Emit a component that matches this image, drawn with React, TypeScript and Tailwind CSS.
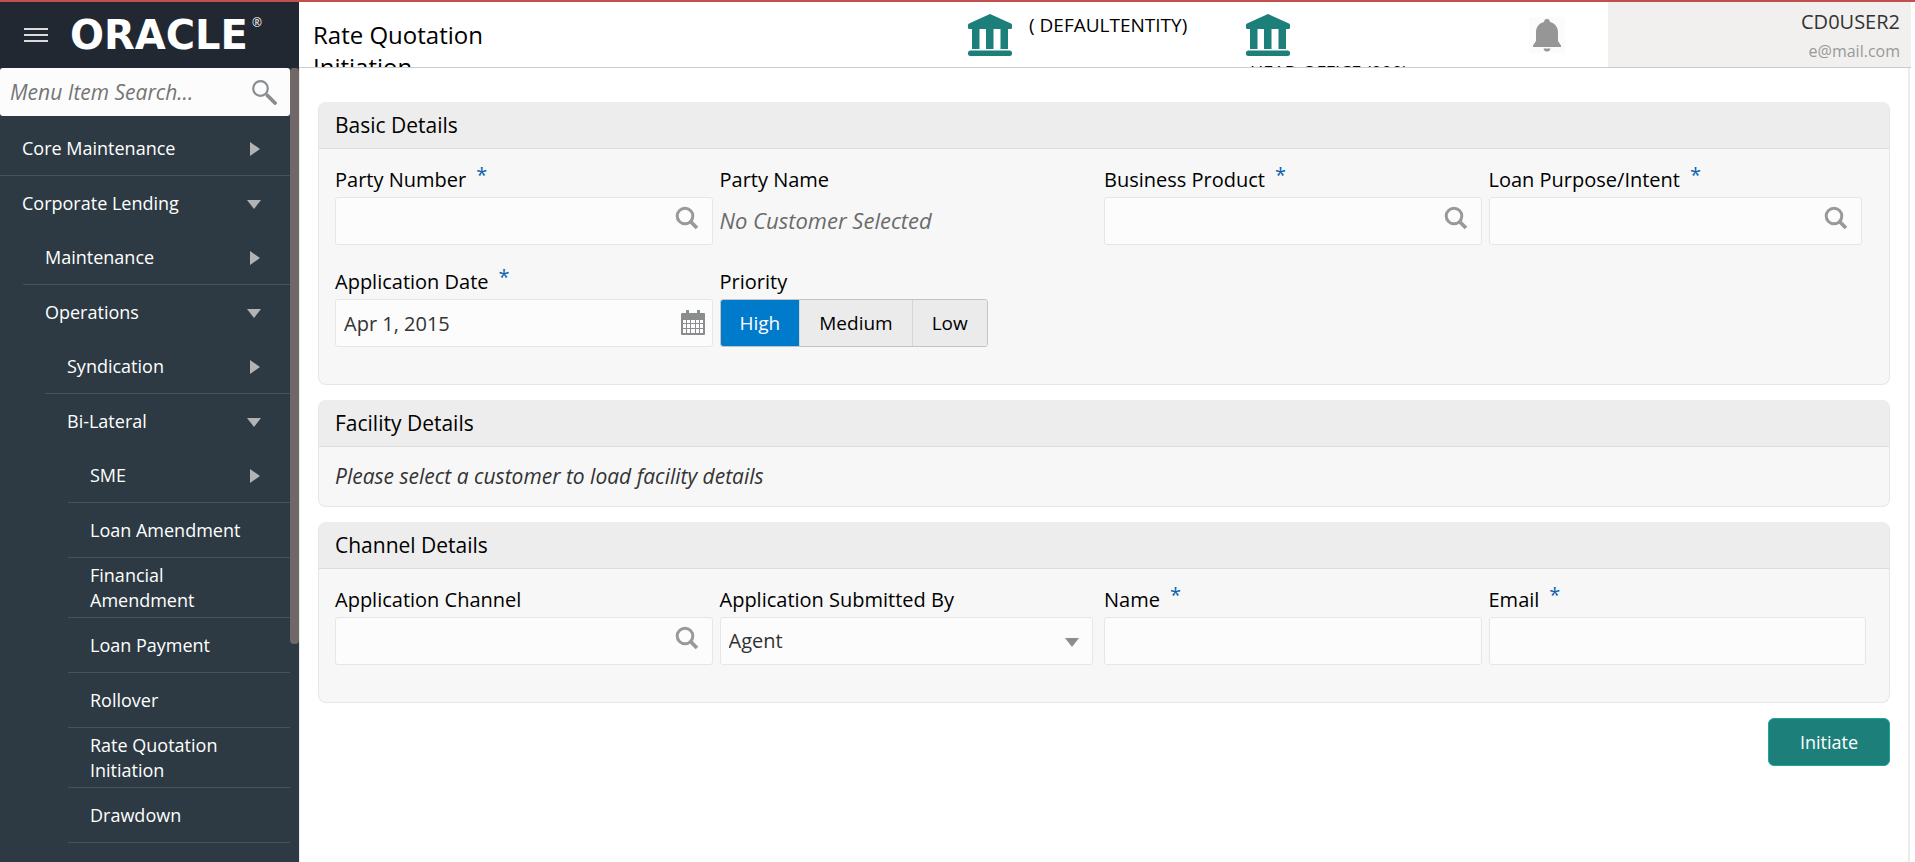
import { useState } from 'react'
import type { ReactNode } from 'react'

type MenuItem = {
  label: string
  level: 0 | 1 | 2 | 3
  state?: 'open' | 'closed'
}

const MENU_ITEMS: MenuItem[] = [
  { label: 'Core Maintenance', level: 0, state: 'closed' },
  { label: 'Corporate Lending', level: 0, state: 'open' },
  { label: 'Maintenance', level: 1, state: 'closed' },
  { label: 'Operations', level: 1, state: 'open' },
  { label: 'Syndication', level: 2, state: 'closed' },
  { label: 'Bi-Lateral', level: 2, state: 'open' },
  { label: 'SME', level: 3, state: 'closed' },
  { label: 'Loan Amendment', level: 3 },
  { label: 'Financial Amendment', level: 3 },
  { label: 'Loan Payment', level: 3 },
  { label: 'Rollover', level: 3 },
  { label: 'Rate Quotation Initiation', level: 3 },
  { label: 'Drawdown', level: 3 },
]

const LEVEL_INDENT = ['ml-0', 'ml-[23px]', 'ml-[45px]', 'ml-[68px]']

const PRIORITIES = ['High', 'Medium', 'Low']

const INPUT_CLASS =
  'h-12 w-full rounded-[3px] border border-[#e6e6e6] bg-[#fcfcfc] px-2 text-xl text-[#333] outline-none'

const BankIcon = () => (
  <svg width="44" height="42" viewBox="0 0 44 42" fill="#1c7f7a" className="shrink-0" aria-hidden="true">
    <path d="M22 0 43 9.5Q44 10 44 11V13.5Q44 15 42.500 15H1.500Q0 15 0 13.500V11Q0 10 1 9.500Z" />
    <path d="M4 14h7.500v21H4zM18 14h7.500v21H18zM32.500 14H40v21h-7.500z" />
    <rect y="36.500" width="44" height="5.500" rx="2.500" />
  </svg>
)

const SearchIcon = () => (
  <svg width="24" height="24" viewBox="0 0 24 24" fill="none" stroke="#999" aria-hidden="true">
    <circle cx="10" cy="10" r="7.800" strokeWidth="3" />
    <path d="m15.500 15.500 6.500 6.500" strokeWidth="3.800" />
  </svg>
)

const CalendarIcon = () => (
  <svg width="24" height="25" viewBox="0 0 24 25" aria-hidden="true">
    <path
      fill="#8a8c8e"
      fillRule="evenodd"
      d="M1 3h4V0h3v3h8V0h3v3h4q1 0 1 1v20q0 1-1 1H1q-1 0-1-1V4q0-1 1-1ZM2 10v3h3v-3ZM6 10v3h3v-3ZM10 10v3h4v-3ZM15 10v3h3v-3ZM19 10v3h3v-3ZM2 14v4h3v-4ZM6 14v4h3v-4ZM10 14v4h4v-4ZM15 14v4h3v-4ZM19 14v4h3v-4ZM2 19v4h3v-4ZM6 19v4h3v-4ZM10 19v4h4v-4ZM15 19v4h3v-4ZM19 19v4h3v-4Z"
    />
  </svg>
)

const BellIcon = () => (
  <svg width="28" height="33" viewBox="0 0 28 33" fill="#969696" aria-hidden="true">
    <path d="M14 0c1.800 0 2.900 1.200 2.900 2.900C21.600 4 25 8 25 13v9l3 4.500V28H0v-1.500L3 22v-9C3 8 6.400 4 11.100 2.900 11.100 1.200 12.200 0 14 0Z" />
    <path d="M10.500 29.500h7q-.5 3-3.500 3t-3.500-3Z" />
  </svg>
)

const Arrow = ({ open }: { open: boolean }) => (
  <svg width="14" height="14" viewBox="0 0 14 14" fill="#b3b3b3" className="shrink-0" aria-hidden="true">
    <path d={open ? 'M0 3h14L7 12z' : 'M3 0v14l10-7z'} />
  </svg>
)

type FieldProps = {
  label: string
  htmlFor?: string
  required?: boolean
  narrow?: boolean
  children: ReactNode
}

const Field = ({ label, htmlFor, required, narrow, children }: FieldProps) => (
  <div className={narrow ? 'pr-[11px]' : 'pr-[7px]'}>
    <div className="flex h-8 items-start gap-2.5 text-xl leading-[30px]">
      {htmlFor ? <label htmlFor={htmlFor}>{label}</label> : <span>{label}</span>}
      {required ? <span className="leading-5 text-[#0b63ad]">*</span> : null}
    </div>
    {children}
  </div>
)

const LookupInput = ({ id, name }: { id: string; name: string }) => (
  <div className="relative">
    <input id={id} type="text" className={INPUT_CLASS} />
    <button type="button" aria-label={`Search ${name}`} className="absolute top-[9px] right-[14px]">
      <SearchIcon />
    </button>
  </div>
)

const Panel = ({ title, children }: { title: string; children: ReactNode }) => (
  <section className="overflow-hidden rounded-lg border border-t-0 border-[#e6e6e6] bg-[#f7f7f7]">
    <h2 className="border-b border-[#dcdcdc] bg-[#ededed] px-4 text-[21px] leading-[46px]">{title}</h2>
    {children}
  </section>
)

const Sidebar = () => (
  <aside className="flex w-[299px] shrink-0 flex-col bg-[#2d3a43]">
    <div className="flex h-[66px] shrink-0 items-center gap-[22px] bg-[#222832] pl-6">
      <button type="button" aria-label="Toggle menu" className="flex w-6 flex-col gap-1">
        <span className="h-0.5 bg-[#dadada]" />
        <span className="h-0.5 bg-[#dadada]" />
        <span className="h-0.5 bg-[#dadada]" />
      </button>
      <div className="flex items-start gap-1 text-white">
        <span className="font-['DejaVu_Sans',sans-serif] text-[40px] leading-10 font-bold">ORACLE</span>
        <span className="text-xs">®</span>
      </div>
    </div>
    <div className="flex min-h-0 flex-1">
      <div className="min-w-0 flex-1 overflow-hidden">
        <div className="relative">
          <input
            type="text"
            aria-label="Menu Item Search"
            placeholder="Menu Item Search..."
            className="h-12 w-full rounded-[3px] bg-[#fcfcfc] px-2.5 text-[21px] italic outline-none placeholder:text-[#757575]"
          />
          <button type="button" aria-label="Search menu" className="absolute top-3 right-[13px]">
            <svg width="25" height="25" viewBox="0 0 25 25" fill="none" aria-hidden="true">
              <circle cx="8.500" cy="8.500" r="7.300" stroke="#8a8d8f" strokeWidth="2.200" />
              <path d="m15.500 15.500 7.500 7.500" stroke="#8a8d8f" strokeWidth="3.800" strokeLinecap="round" />
            </svg>
          </button>
        </div>
        <nav className="pt-[5px]">
          <ul>
            {MENU_ITEMS.map((item) => (
              <li
                key={item.label}
                className={`${LEVEL_INDENT[item.level]} ${item.state === 'open' ? '' : 'border-b border-[#44535e]'}`}
              >
                <a
                  href="#"
                  className="flex min-h-[54px] items-center justify-between pt-[5px] pr-[29px] pb-1 pl-[22px] text-lg leading-[25px] text-white"
                >
                  {item.label}
                  {item.state ? <Arrow open={item.state === 'open'} /> : null}
                </a>
              </li>
            ))}
          </ul>
        </nav>
      </div>
      <div className="w-[9px] shrink-0">
        <div className="h-[576px] rounded bg-[#706866]" />
      </div>
    </div>
  </aside>
)

const Header = () => (
  <header className="mr-1 flex h-[66px] shrink-0 overflow-hidden border-b border-[#cbcccc]">
    <h1 className="w-[652px] shrink-0 pt-[17px] pl-3.5 text-2xl leading-8">
      <span className="block w-[200px]">Rate Quotation Initiation</span>
    </h1>
    <div className="flex w-[278px] shrink-0 gap-[17px] pt-3 pl-[17px] text-[19px]">
      <BankIcon />
      <span className="leading-[22px] whitespace-nowrap">( DEFAULTENTITY)</span>
    </div>
    <div className="w-[240px] shrink-0 pt-3 pl-[17px] text-lg">
      <BankIcon />
      <p className="mt-[5px] pl-1 leading-[22px] whitespace-nowrap">HEAD OFFICE (000)</p>
    </div>
    <div className="min-w-0 flex-1 pt-[15px] pl-[60px]">
      <button type="button" aria-label="Notifications" className="flex size-9 items-center justify-center bg-[#fbfbfb]">
        <BellIcon />
      </button>
    </div>
    <div className="w-[303px] shrink-0 bg-[#f1f0ee] pt-[5px] pr-[11px] text-right">
      <p className="text-xl leading-[30px] text-[#333]">CD0USER2</p>
      <p className="text-base leading-7 text-[#999]">e@mail.com</p>
    </div>
  </header>
)

const App = () => {
  const [priority, setPriority] = useState('High')

  return (
    <div className="flex h-screen overflow-hidden border-t-2 border-[#c0504d] bg-white font-['Open_Sans','Noto_Sans',sans-serif] text-black">
      <Sidebar />
      <div className="flex min-w-0 flex-1 flex-col">
        <Header />
        <main className="mr-[5px] flex-1 border-r-2 border-l border-[#ebebeb] px-[18px] pt-[34px]">
          <form className="flex flex-col gap-[15px]" onSubmit={(event) => event.preventDefault()}>
            <Panel title="Basic Details">
              <div className="grid grid-cols-4 gap-y-[22px] px-4 pt-4 pb-[37px]">
                <Field label="Party Number" htmlFor="party-number" required>
                  <LookupInput id="party-number" name="Party Number" />
                </Field>
                <Field label="Party Name">
                  <p className="text-[22px] leading-[46px] text-[#6b6b6b] italic">No Customer Selected</p>
                </Field>
                <Field label="Business Product" htmlFor="business-product" required>
                  <LookupInput id="business-product" name="Business Product" />
                </Field>
                <Field label="Loan Purpose/Intent" htmlFor="loan-purpose" required narrow>
                  <LookupInput id="loan-purpose" name="Loan Purpose/Intent" />
                </Field>
                <Field label="Application Date" htmlFor="application-date" required>
                  <div className="relative">
                    <input id="application-date" type="text" defaultValue="Apr 1, 2015" className={INPUT_CLASS} />
                    <button type="button" aria-label="Select date" className="absolute top-[11px] right-2">
                      <CalendarIcon />
                    </button>
                  </div>
                </Field>
                <Field label="Priority">
                  <div
                    role="group"
                    aria-label="Priority"
                    className="inline-flex h-12 overflow-hidden rounded-[3px] border border-[#c4c4c4] text-[19px]"
                  >
                    {PRIORITIES.map((level) => (
                      <button
                        key={level}
                        type="button"
                        aria-pressed={priority === level}
                        onClick={() => setPriority(level)}
                        className={`border-r border-[#d6d6d6] px-[19px] last:border-r-0 ${
                          priority === level ? 'bg-[#007aca] text-white' : 'bg-[#ebebeb]'
                        }`}
                      >
                        {level}
                      </button>
                    ))}
                  </div>
                </Field>
              </div>
            </Panel>

            <Panel title="Facility Details">
              <p className="px-4 pt-[13px] pb-3.5 text-[21px] leading-8 text-[#333] italic">
                Please select a customer to load facility details
              </p>
            </Panel>

            <Panel title="Channel Details">
              <div className="grid grid-cols-4 px-4 pt-4 pb-[37px]">
                <Field label="Application Channel" htmlFor="application-channel">
                  <LookupInput id="application-channel" name="Application Channel" />
                </Field>
                <Field label="Application Submitted By" htmlFor="submitted-by" narrow>
                  <div className="relative">
                    <select id="submitted-by" defaultValue="Agent" className={`${INPUT_CLASS} appearance-none`}>
                      <option>Agent</option>
                      <option>Customer</option>
                    </select>
                    <svg
                      width="14"
                      height="9"
                      viewBox="0 0 14 9"
                      fill="#8a8c8e"
                      className="pointer-events-none absolute top-[21px] right-[14px]"
                      aria-hidden="true"
                    >
                      <path d="M0 0h14L7 9z" />
                    </svg>
                  </div>
                </Field>
                <Field label="Name" htmlFor="name" required>
                  <input id="name" type="text" className={INPUT_CLASS} />
                </Field>
                <Field label="Email" htmlFor="email" required>
                  <input id="email" type="text" className={INPUT_CLASS} />
                </Field>
              </div>
            </Panel>

            <button
              type="submit"
              className="h-12 w-[122px] self-end rounded-md border border-[#1aa899] bg-[#1c7f7a] text-lg text-white"
            >
              Initiate
            </button>
          </form>
        </main>
      </div>
    </div>
  )
}

export default App
